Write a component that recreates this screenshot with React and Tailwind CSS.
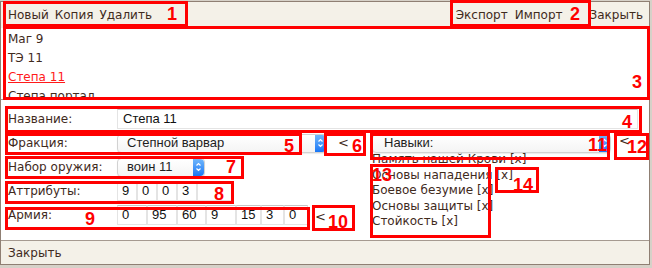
import React from "react";

// little blue up/down stepper used by the mac style selects
const Stepper = () => (
  <div className="flex h-full w-[11px] shrink-0 items-center justify-center rounded-r-[4px] bg-gradient-to-b from-[#6fb6fb] to-[#1676f5]">
    <svg width="7" height="12" viewBox="0 0 7 12" fill="none">
      <path d="M1.5 4.5 L3.5 2.5 L5.5 4.5" stroke="white" strokeWidth="1.2" />
      <path d="M1.5 7.5 L3.5 9.5 L5.5 7.5" stroke="white" strokeWidth="1.2" />
    </svg>
  </div>
);

const Select = ({ value, className }) => (
  <div
    className={`flex h-[19px] items-center justify-between rounded-[4px] border border-[#d2d2d2] bg-gradient-to-b from-white to-[#f4f4f4] shadow-[0_1px_1px_rgba(0,0,0,0.08)] ${className}`}
  >
    <span className="pl-[9px] text-[13px] text-[#1e1e1e] [font-family:'Liberation_Sans',sans-serif]">
      {value}
    </span>
    <Stepper />
  </div>
);

const Field = ({ value, className }) => (
  <div
    className={`flex h-[20px] items-center border border-[#e4e4e4] border-t-[#c6c6c6] bg-white pl-[4px] text-[13px] text-[#111] [font-family:'Liberation_Sans',sans-serif] ${className}`}
  >
    {value}
  </div>
);

const skills = [
  "Память нашей Крови",
  "Основы нападения",
  "Боевое безумие",
  "Основы защиты",
  "Стойкость",
];

// red annotation boxes drawn over the screenshot
const boxes = [
  "left-[3px] top-[1px] w-[185px] h-[26px]",
  "left-[450px] top-[0px] w-[141px] h-[27px]",
  "left-[3px] top-[26px] w-[647px] h-[74px]",
  "left-[5px] top-[106px] w-[637px] h-[27px]",
  "left-[5px] top-[133px] w-[297px] h-[22px]",
  "left-[324px] top-[133px] w-[42px] h-[23px]",
  "left-[370px] top-[133px] w-[240px] h-[27px]",
  "left-[614px] top-[133px] w-[35px] h-[27px]",
  "left-[5px] top-[156px] w-[239px] h-[23px]",
  "left-[370px] top-[164px] w-[121px] h-[74px]",
  "left-[495px] top-[167px] w-[44px] h-[26px]",
  "left-[5px] top-[181px] w-[229px] h-[23px]",
  "left-[5px] top-[207px] w-[305px] h-[23px]",
  "left-[312px] top-[205px] w-[43px] h-[26px]",
];

const numbers = [
  { n: "1", c: "left-[167px] top-[5px]" },
  { n: "2", c: "left-[570px] top-[5px]" },
  { n: "3", c: "left-[632px] top-[73px]" },
  { n: "4", c: "left-[622px] top-[113px]" },
  { n: "5", c: "left-[284px] top-[137px]" },
  { n: "6", c: "left-[352px] top-[137px]" },
  { n: "7", c: "left-[226px] top-[158px]" },
  { n: "8", c: "left-[214px] top-[185px]" },
  { n: "9", c: "left-[85px] top-[210px]" },
  { n: "10", c: "left-[328px] top-[213px]" },
  { n: "11", c: "left-[588px] top-[136px]" },
  { n: "12", c: "left-[627px] top-[138px]" },
  { n: "13", c: "left-[372px] top-[166px]" },
  { n: "14", c: "left-[513px] top-[176px]" },
];

const App = () => {
  return (
    <div className="relative h-[268px] w-[652px] overflow-hidden bg-[#d6d1c8] text-[12px] text-[#3f2a1c] [font-family:'DejaVu_Sans',Verdana,sans-serif]">
      <div className="mt-[1px] flex h-[264px] w-[650px] flex-col border-x border-y border-[#8f7f73] bg-white">
        {/* top toolbar */}
        <div className="flex h-[26px] items-center justify-between bg-[#f4f1e8] pl-[7px] pr-[6px]">
          <div className="flex gap-[6px]">
            <span>Новый</span>
            <span>Копия</span>
            <span>Удалить</span>
          </div>
          <div className="flex items-center">
            <span>Экспорт</span>
            <span className="ml-[7px]">Импорт</span>
            <span className="ml-[27px]">Закрыть</span>
          </div>
        </div>

        {/* saved list */}
        <div className="h-[72px] overflow-hidden border-b border-[#a59a90] pl-[7px] pt-[2px] leading-[19px]">
          <div>Маг 9</div>
          <div>ТЭ 11</div>
          <div className="text-[#ff1a1a] underline">Степа 11</div>
          <div>Степа портал</div>
        </div>

        {/* form */}
        <div className="flex-1 pt-[7px]">
          <div className="flex h-[24px] items-center pl-[7px]">
            <span className="w-[109px] shrink-0">Название:</span>
            <Field value="Степа 11" className="w-[521px] pl-[5px]" />
          </div>

          <div className="flex">
            <div className="w-[371px] shrink-0 pl-[7px]">
              <div className="flex h-[24px] items-center">
                <span className="w-[109px] shrink-0">Фракция:</span>
                <Select value="Степной варвар" className="w-[210px]" />
                <span className="ml-[11px] text-[13px]">&lt;</span>
              </div>
              <div className="flex h-[24px] items-center">
                <span className="w-[109px] shrink-0">Набор оружия:</span>
                <Select value="воин 11" className="w-[88px]" />
              </div>
              <div className="flex h-[24px] items-center">
                <span className="w-[109px] shrink-0">Аттрибуты:</span>
                <Field value="9" className="w-[20px]" />
                <Field value="0" className="w-[20px]" />
                <Field value="0" className="w-[20px]" />
                <Field value="3" className="w-[20px]" />
                <Field value="" className="w-[35px]" />
              </div>
              <div className="flex h-[24px] items-center">
                <span className="w-[109px] shrink-0">Армия:</span>
                <Field value="0" className="w-[30px]" />
                <Field value="95" className="w-[30px]" />
                <Field value="60" className="w-[29px]" />
                <Field value="9" className="w-[30px]" />
                <Field value="15" className="w-[25px]" />
                <Field value="3" className="w-[23px]" />
                <Field value="0" className="w-[24px]" />
                <span className="ml-[7px] mt-[3px] text-[13px]">&lt;</span>
              </div>
            </div>

            <div className="flex-1">
              <div className="flex h-[24px] items-center">
                <Select value="Навыки:" className="w-[239px] pl-[2px]" />
                <span className="ml-[8px] mb-[4px] text-[13px]">&lt;</span>
              </div>
              <div className="-mt-[3px] leading-[15.5px]">
                {skills.map((s) => (
                  <div key={s}>{s} [x]</div>
                ))}
              </div>
            </div>
          </div>
        </div>

        {/* bottom bar */}
        <div className="flex h-[24px] items-center border-t border-[#a59a90] bg-[#f4f1e8] pl-[7px]">
          Закрыть
        </div>
      </div>

      {/* annotation layer */}
      {boxes.map((b) => (
        <div key={b} className={`absolute border-[3px] border-[#ff0000] ${b}`} />
      ))}
      {numbers.map((x) => (
        <div
          key={x.n}
          className={`absolute text-[18px] font-bold leading-none text-[#ff0000] [font-family:'Liberation_Sans_Narrow','Liberation_Sans',sans-serif] ${x.c}`}
        >
          {x.n}
        </div>
      ))}
    </div>
  );
};

export default App;
